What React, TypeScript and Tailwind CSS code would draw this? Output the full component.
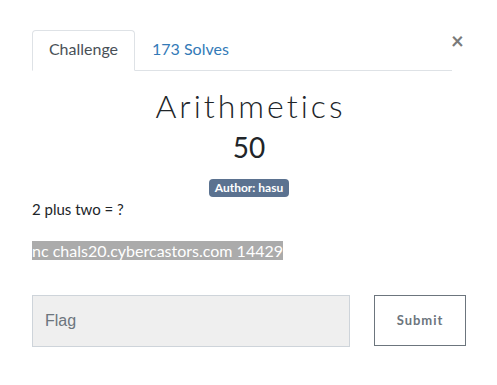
import React, { useState } from 'react';

const App: React.FC = () => {
  const [flag, setFlag] = useState('');

  return (
    <div className="w-[497px] h-[385px] bg-white relative font-['Lato','Liberation_Sans',sans-serif] text-[#212529]">
      {/* close */}
      <button className="absolute left-[451px] top-[30px] text-[22px] leading-none font-bold text-[#7a7a7a]">×</button>

      <div className="pt-[30px] pl-[32px] pr-[31px]">
        {/* tabs */}
        <div className="flex border-b border-[#dee2e6] mr-[14px] h-[41px]">
          <div className="w-[103px] h-[41px] pb-[3px] border border-[#dee2e6] border-b-white rounded-t-[4px] bg-white flex items-center justify-center text-[16px] text-[#495057] -mb-px">
            Challenge
          </div>
          <div className="px-[17px] h-[40px] pb-[2px] flex items-center text-[16px] text-[#337ab7]">173 Solves</div>
        </div>

        {/* header */}
        <div className="flex flex-col items-center">
          <h1 className="mt-[16px] text-[32px] leading-[38px] font-light tracking-[3px] pl-[3px] text-[#212529]">Arithmetics</h1>
          <h3 className="mt-[5px] text-[28px] leading-[34px] font-normal text-[#212529]">50</h3>
          <span className="mt-[15px] h-[18px] px-[6px] rounded-[4px] bg-[#5b7290] text-white text-[12px] font-bold leading-[18px]">Author: hasu</span>
        </div>

        {/* description */}
        <p className="mt-0 text-[15px] leading-[24px]">2 plus two = ?</p>
        <p className="mt-[22px] text-[16px] leading-[16px]">
          <span className="bg-[#ababab] text-white">nc chals20.cybercastors.com 14429</span>
        </p>

        {/* submit row */}
        <div className="mt-[36px] flex justify-between">
          <input
            value={flag}
            onChange={e => setFlag(e.target.value)}
            placeholder="Flag"
            className="w-[318px] h-[52px] bg-[#efefef] border border-[#ced4da] px-[12px] text-[16px] font-['Liberation_Sans',sans-serif] placeholder-[#6c757d] outline-none"
          />
          <button className="w-[92px] h-[51px] border border-[#6c757d] text-[#6c757d] text-[13px] font-bold tracking-[1px]">
            Submit
          </button>
        </div>
      </div>
    </div>
  );
};

export default App;
